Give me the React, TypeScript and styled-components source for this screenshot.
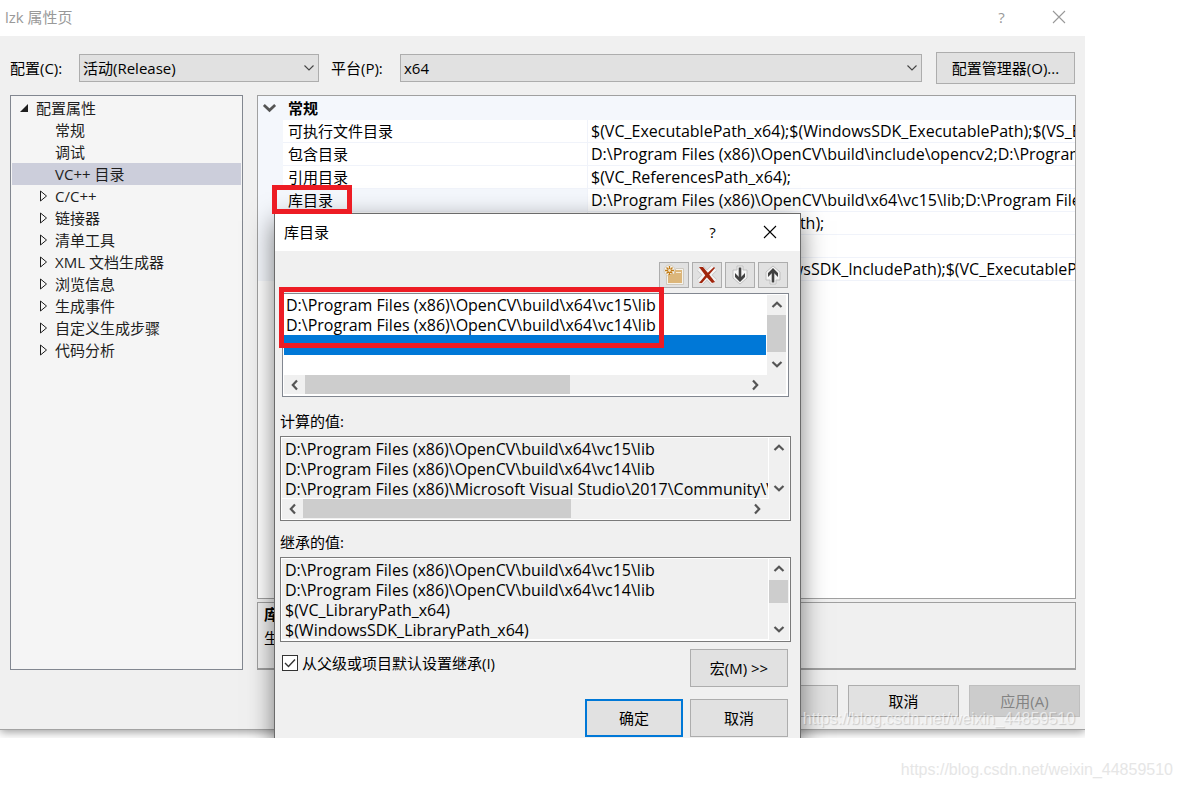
import React from 'react';
import styled, { createGlobalStyle, css } from 'styled-components';

const GlobalStyle = createGlobalStyle`
  *, *::before, *::after { box-sizing: border-box; }
  body {
    margin: 0;
    background: #fff;
    color: #000;
    font-family: "Open Sans", "Noto Sans CJK SC", sans-serif;
    font-size: 15px;
    line-height: 20px;
  }
  button, select, input, textarea { font: inherit; color: inherit; }
  ul { list-style: none; margin: 0; padding: 0; }
`;

const Page = styled.div`
  display: flex;
  flex-direction: column;
`;

const Desktop = styled.div`
  position: relative;
  overflow: hidden;
  margin-right: 97px;
  padding-bottom: 8px;
`;

const PropertyWindow = styled.main`
  border-bottom: 1px solid #a3a3a3;
  box-shadow: 0 2px 9px rgba(0, 0, 0, 0.4);
  background: #f0f0f0;
`;

const TitleBar = styled.header<{ $height: number; $inactive?: boolean }>`
  display: flex;
  align-items: center;
  justify-content: space-between;
  height: ${(p) => p.$height}px;
  padding-bottom: 2px;
  background: #fff;
  color: ${(p) => (p.$inactive ? '#999' : '#000')};
`;

const WindowTitle = styled.h1<{ $inset: number }>`
  margin: 0;
  padding-left: ${(p) => p.$inset}px;
  font-size: 15px;
  font-weight: 400;
`;

const TitleButtons = styled.div<{ $edge: number }>`
  display: flex;
  gap: 34px;
  padding-right: ${(p) => p.$edge}px;
`;

const TitleButton = styled.button`
  display: grid;
  place-items: center;
  width: 23px;
  height: 24px;
  padding: 0;
  border: 0;
  background: none;
`;

const Body = styled.div`
  padding: 16px 9px 12px 10px;
`;

const ConfigBar = styled.div`
  display: flex;
  align-items: center;
  height: 32px;
  padding-right: 1px;
`;

const ConfigLabel = styled.label`
  flex: none;
  width: 69px;
`;

const SelectWrap = styled.div<{ $width?: number }>`
  display: grid;
  align-items: center;
  height: 28px;
  ${(p) => (p.$width ? css`flex: none; width: ${p.$width}px; margin-right: 12px;` : css`flex: 1; margin-right: 14px;`)}

  > * { grid-area: 1 / 1; }
  > svg { justify-self: end; margin-right: 4px; pointer-events: none; }
`;

const Select = styled.select`
  appearance: none;
  width: 100%;
  height: 28px;
  padding: 0 24px 0 3px;
  border: 1px solid #adadad;
  border-radius: 0;
  background: #e1e1e1;
`;

const Button = styled.button<{ $width: number; $height: number; $primary?: boolean }>`
  flex: none;
  width: ${(p) => p.$width}px;
  height: ${(p) => p.$height}px;
  padding: 0;
  border: ${(p) => (p.$primary ? '2px solid #0078d7' : '1px solid #adadad')};
  background: #e1e1e1;

  &:disabled {
    border-color: #bfbfbf;
    background: #ccc;
    color: #838383;
  }
`;

const Panels = styled.div`
  display: flex;
  gap: 14px;
  height: 575px;
  margin-top: 11px;
`;

const Tree = styled.ul`
  flex: none;
  width: 233px;
  padding: 1px;
  border: 1px solid #828790;
  background: #f5f5f5;
  color: #1e1e1e;
`;

const TreeRow = styled.li<{ $root?: boolean; $selected?: boolean }>`
  display: flex;
  align-items: center;
  height: 22px;
  padding-left: ${(p) => (p.$root ? 7 : 26)}px;
  background: ${(p) => (p.$selected ? '#cccedb' : 'transparent')};
`;

const Twisty = styled.span`
  display: flex;
  align-items: center;
  width: 17px;
`;

const Right = styled.div`
  display: flex;
  flex: 1;
  flex-direction: column;
  gap: 3px;
  min-width: 0;
`;

const GridPanel = styled.section`
  flex: 1;
  overflow: hidden;
  border: 1px solid #a0a0a0;
  background: #fff;
`;

const CategoryRow = styled.div`
  display: flex;
  align-items: center;
  height: 24px;
  padding-bottom: 1px;
  background: #f4f7fc;
  font-weight: 700;
`;

const Gutter = styled.span`
  display: flex;
  width: 30px;
  padding-left: 4px;
`;

const PropertyTable = styled.table`
  width: 100%;
  border-left: 25px solid #f4f7fc;
  border-spacing: 0;
  table-layout: fixed;
`;

const NameCell = styled.th<{ $selected?: boolean }>`
  width: 305px;
  height: 23px;
  padding: 0 0 0 5px;
  border-right: 1px solid #f0f3fa;
  border-bottom: 1px solid #f0f3fa;
  background: ${(p) => (p.$selected ? '#f4f7fc' : '#fff')};
  font-weight: 400;
  text-align: left;
`;

const ValueCell = styled.td`
  height: 23px;
  padding: 0 0 0 3px;
  overflow: hidden;
  border-bottom: 1px solid #f0f3fa;
  font-size: 16px;
  white-space: nowrap;
`;

const Description = styled.section`
  display: flex;
  flex-direction: column;
  gap: 4px;
  height: 68px;
  padding: 1px 6px;
  overflow: hidden;
  border: 1px solid #a0a0a0;
  border-bottom-width: 2px;
  white-space: nowrap;

  p { margin: 0; }
`;

const WindowActions = styled.div`
  display: flex;
  justify-content: flex-end;
  gap: 10px;
  margin: 15px -4px 0 0;
`;

const Dialog = styled.section`
  position: absolute;
  top: 213px;
  left: 274px;
  width: 527px;
  border: 1px solid #6b6b6b;
  background: #f0f0f0;
  box-shadow: 0 8px 24px rgba(0, 0, 0, 0.5);
`;

const DialogBody = styled.div`
  display: flex;
  flex-direction: column;
  padding: 11px 9px 12px 5px;
`;

const Toolbar = styled.div`
  display: flex;
  justify-content: flex-end;
  gap: 3px;
  padding-right: 3px;
`;

const ToolButton = styled.button`
  display: grid;
  place-items: center;
  width: 30px;
  height: 26px;
  padding: 0;
  border: 1px solid #adadad;
  background: #e1e1e1;
`;

const ListFrame = styled.div`
  display: grid;
  grid-template-columns: 1fr 19px;
  grid-template-rows: 80px 19px;
  height: 104px;
  margin: 5px 2px 14px;
  padding: 1px 2px 1px 1px;
  border: 1px solid #828790;
  background: #fff;
`;

const ListItem = styled.li<{ $selected?: boolean }>`
  height: 20px;
  margin-right: 1px;
  padding-left: 2px;
  background: ${(p) => (p.$selected ? '#0078d7' : '#fff')};
  font-size: 16px;
`;

const FieldLabel = styled.label`
  height: 20px;
  margin-bottom: 5px;
`;

const TextFrame = styled.div<{ $horizontal?: boolean }>`
  display: grid;
  grid-template-columns: 1fr 19px;
  grid-template-rows: ${(p) => (p.$horizontal ? '61px 19px' : '81px')};
  width: 511px;
  height: 85px;
  margin-bottom: ${(p) => (p.$horizontal ? 11 : 7)}px;
  padding: 1px 2px 1px 1px;
  border: 1px solid #7a7a7a;
  background: #f0f0f0;
  box-shadow: inset 0 0 0 1px #fff;
`;

const ValueText = styled.textarea`
  display: block;
  width: 100%;
  height: 100%;
  padding: 1px 4px 0 3px;
  overflow: hidden;
  resize: none;
  border: 0;
  border-right: 1px solid #fff;
  border-bottom: 1px solid #fff;
  outline: 0;
  background: #f0f0f0;
  font-size: 16px;
  white-space: pre;
`;

const ScrollTrack = styled.div<{ $vertical?: boolean }>`
  display: flex;
  flex-direction: ${(p) => (p.$vertical ? 'column' : 'row')};
  align-items: center;
  justify-content: space-between;
  padding: ${(p) => (p.$vertical ? '0 0 2px' : '0 3px 0 0')};
  background: #f0f0f0;
`;

const ScrollArrow = styled.span<{ $long?: boolean }>`
  display: grid;
  flex: none;
  place-items: center;
  width: ${(p) => (p.$long ? 21 : 19)}px;
  height: 19px;
`;

const ScrollRun = styled.div`
  display: flex;
  flex: 1;
  flex-direction: inherit;
  align-self: stretch;
`;

const ScrollThumb = styled.div<{ $size: number }>`
  flex: 0 0 ${(p) => p.$size}px;
  background: #cdcdcd;
`;

const InheritRow = styled.div`
  display: flex;
  align-items: flex-start;
  justify-content: space-between;
  padding: 0 3px 0 2px;
`;

const CheckLabel = styled.label`
  display: flex;
  align-items: center;
  gap: 4px;
  padding-top: 4px;
`;

const CheckMark = styled.span`
  display: grid;
  width: 16px;
  height: 16px;

  > * { grid-area: 1 / 1; margin: 0; }
  > svg { pointer-events: none; }
`;

const CheckInput = styled.input`
  appearance: none;
  width: 16px;
  height: 16px;
  border: 1px solid #333;
  background: #fff;
`;

const DialogActions = styled.div`
  display: flex;
  justify-content: flex-end;
  gap: 7px;
  padding: 12px 3px 0 0;
`;

const Highlight = styled.div<{ $left: number; $top: number; $width: number; $height: number }>`
  position: absolute;
  top: ${(p) => p.$top}px;
  left: ${(p) => p.$left}px;
  width: ${(p) => p.$width}px;
  height: ${(p) => p.$height}px;
  border: 5px solid #ed1c24;
  pointer-events: none;
`;

const watermark = css`
  font-family: "Liberation Sans", sans-serif;
  font-size: 16px;
  line-height: 20px;
  white-space: nowrap;
`;

const WindowWatermark = styled.span`
  ${watermark}
  position: absolute;
  right: 10px;
  bottom: 9px;
  color: rgba(255, 255, 255, 0.6);
  text-shadow: 1px 1px 1px rgba(0, 0, 0, 0.16);
  pointer-events: none;
`;

const PageWatermark = styled.footer`
  ${watermark}
  align-self: flex-end;
  padding: 22px 9px 0 0;
  color: #e6e6e6;
`;

type Direction = 'up' | 'down' | 'left' | 'right';

const turns: Record<Direction, number> = { down: 0, left: 90, up: 180, right: 270 };

function Chevron({ to, bold, size = 12 }: { to: Direction; bold?: boolean; size?: number }) {
  return (
    <svg width={size} height={size} viewBox="0 0 12 12" fill="none" aria-hidden="true">
      <path
        d={bold ? 'M1.5 4 L6 8.2 L10.5 4' : 'M1.5 3.5 L6 8 L10.5 3.5'}
        stroke={bold ? '#555' : '#444'}
        strokeWidth={bold ? 2.2 : 1.1}
        transform={`rotate(${turns[to]} 6 6)`}
      />
    </svg>
  );
}

function CloseIcon() {
  return (
    <svg width="14" height="14" viewBox="0 0 14 14" fill="none" stroke="currentColor" strokeWidth="1.1" aria-hidden="true">
      <path d="M1 1 L13 13 M13 1 L1 13" />
    </svg>
  );
}

function NewFolderIcon() {
  return (
    <svg width="22" height="22" viewBox="0 0 22 22" aria-hidden="true">
      <path d="M3.5 9 H11 L13 4.500 H20.500 V20.500 H3.500z" fill="#f6f3ec" stroke="#cfcac0" />
      <circle cx="6.500" cy="6.500" r="5.500" fill="#f6f3ec" stroke="#cfcac0" />
      <path d="M5 10 H19 V19 H5z" fill="#dcb67a" />
      <path d="M12 6 H19 V10 H11z" fill="#dcb67a" />
      <path d="M13 8 H18 V9 H13z" fill="#f7ecd8" />
      <path d="M6.500 2 V11 M2 6.500 H11 M3.500 3.500 L9.500 9.500 M9.500 3.500 L3.500 9.500" stroke="#c27d1a" strokeWidth="1.300" />
      <circle cx="6.500" cy="6.500" r="1.400" fill="#f3e2c4" />
    </svg>
  );
}

function DeleteIcon() {
  return (
    <svg width="22" height="22" viewBox="0 0 22 22" fill="none" aria-hidden="true">
      <path d="M4 4 L18 18 M18 4 L4 18" stroke="#c6c6c6" strokeWidth="8" />
      <path d="M4 4 L18 18 M18 4 L4 18" stroke="#f5f5f5" strokeWidth="6.500" />
      <path d="M3 3 L7 3 L12 9 L19 18 L16 19 L10.500 13z" fill="#a1260d" />
      <path d="M3 19 L10 10.500 L18 3 L19 4 L12 12 L6 19z" fill="#a1260d" />
    </svg>
  );
}

function MoveIcon({ up }: { up?: boolean }) {
  return (
    <svg width="18" height="20" viewBox="0 0 18 20" fill="none" aria-hidden="true">
      <g transform={up ? 'rotate(180 9 10)' : undefined}>
        <path d="M6 1 H12 V5 H16 V13 L9 19 L2 13 V5 H6z" fill="#f6f6f6" stroke="#c0c0c0" />
        <path d="M9 2.500 V14" stroke="#424242" strokeWidth="2.600" />
        <path d="M4 8 L9 13 L14 8 V12 L9 17 L4 12z" fill="#424242" />
      </g>
    </svg>
  );
}

function Scrollbar({ vertical, arrow, thumb, offset = 0 }: {
  vertical?: boolean; arrow?: boolean; thumb?: number; offset?: number;
}) {
  return (
    <ScrollTrack $vertical={vertical} aria-hidden="true">
      <ScrollArrow $long={arrow}><Chevron bold to={vertical ? 'up' : 'left'} /></ScrollArrow>
      <ScrollRun style={offset ? { paddingTop: offset } : undefined}>{thumb ? <ScrollThumb $size={thumb} /> : null}</ScrollRun>
      <ScrollArrow><Chevron bold to={vertical ? 'down' : 'right'} /></ScrollArrow>
    </ScrollTrack>
  );
}

const treeItems = [
  { text: '常规' },
  { text: '调试' },
  { text: 'VC++ 目录', selected: true },
  { text: 'C/C++', branch: true },
  { text: '链接器', branch: true },
  { text: '清单工具', branch: true },
  { text: 'XML 文档生成器', branch: true },
  { text: '浏览信息', branch: true },
  { text: '生成事件', branch: true },
  { text: '自定义生成步骤', branch: true },
  { text: '代码分析', branch: true },
];

const properties = [
  ['可执行文件目录', '$(VC_ExecutablePath_x64);$(WindowsSDK_ExecutablePath);$(VS_ExecutablePath)'],
  ['包含目录', 'D:\\Program Files (x86)\\OpenCV\\build\\include\\opencv2;D:\\Program Files (x86)'],
  ['引用目录', '$(VC_ReferencesPath_x64);'],
  ['库目录', 'D:\\Program Files (x86)\\OpenCV\\build\\x64\\vc15\\lib;D:\\Program Files (x86)'],
  ['库 WinRT 目录', '$(WindowsSDK_MetadataPath);'],
  ['源目录', '$(VC_SourcePath);'],
  ['排除目录', '$(VC_IncludePath);$(WindowsSDK_IncludePath);$(VC_ExecutablePath_x64)'],
];

const paths = [
  'D:\\Program Files (x86)\\OpenCV\\build\\x64\\vc15\\lib',
  'D:\\Program Files (x86)\\OpenCV\\build\\x64\\vc14\\lib',
];
const computed = [...paths, 'D:\\Program Files (x86)\\Microsoft Visual Studio\\2017\\Community\\VC'].join('\n');
const inherited = [...paths, '$(VC_LibraryPath_x64)', '$(WindowsSDK_LibraryPath_x64)'].join('\n');
const blogUrl = 'https://blog.csdn.net/weixin_44859510';

function LibraryDialog() {
  return (
    <Dialog role="dialog" aria-label="库目录">
      <TitleBar $height={37}>
        <WindowTitle as="h2" $inset={9}>库目录</WindowTitle>
        <TitleButtons $edge={19}>
          <TitleButton>?</TitleButton>
          <TitleButton aria-label="关闭"><CloseIcon /></TitleButton>
        </TitleButtons>
      </TitleBar>
      <DialogBody>
        <Toolbar>
          <ToolButton aria-label="新行"><NewFolderIcon /></ToolButton>
          <ToolButton aria-label="删除"><DeleteIcon /></ToolButton>
          <ToolButton aria-label="下移"><MoveIcon /></ToolButton>
          <ToolButton aria-label="上移"><MoveIcon up /></ToolButton>
        </Toolbar>
        <ListFrame>
          <ul>
            {paths.map((p) => <ListItem key={p}>{p}</ListItem>)}
            <ListItem $selected />
          </ul>
          <Scrollbar vertical thumb={37} offset={1} />
          <Scrollbar arrow thumb={265} />
          <ScrollTrack />
        </ListFrame>
        <FieldLabel htmlFor="computed">计算的值:</FieldLabel>
        <TextFrame $horizontal>
          <ValueText id="computed" readOnly value={computed} />
          <Scrollbar vertical />
          <Scrollbar arrow thumb={268} />
          <ScrollTrack />
        </TextFrame>
        <FieldLabel htmlFor="inherited">继承的值:</FieldLabel>
        <TextFrame>
          <ValueText id="inherited" readOnly value={inherited} />
          <Scrollbar vertical thumb={23} offset={2} />
        </TextFrame>
        <InheritRow>
          <CheckLabel>
            <CheckMark>
              <CheckInput type="checkbox" defaultChecked />
              <svg width="16" height="16" viewBox="0 0 16 16" fill="none" aria-hidden="true">
                <path d="M3 8 L6.500 11.500 L13 4.500" stroke="#333" strokeWidth="1.400" />
              </svg>
            </CheckMark>
            从父级或项目默认设置继承(I)
          </CheckLabel>
          <Button $width={98} $height={38}>宏(M) &gt;&gt;</Button>
        </InheritRow>
        <DialogActions>
          <Button $width={98} $height={38} $primary>确定</Button>
          <Button $width={98} $height={38}>取消</Button>
        </DialogActions>
      </DialogBody>
    </Dialog>
  );
}

export default function App() {
  return (
    <Page>
      <GlobalStyle />
      <Desktop>
        <PropertyWindow>
          <TitleBar $height={36} $inactive>
            <WindowTitle $inset={5}>lzk 属性页</WindowTitle>
            <TitleButtons $edge={15}>
              <TitleButton>?</TitleButton>
              <TitleButton aria-label="关闭"><CloseIcon /></TitleButton>
            </TitleButtons>
          </TitleBar>
          <Body>
            <ConfigBar>
              <ConfigLabel htmlFor="configuration">配置(C):</ConfigLabel>
              <SelectWrap $width={240}>
                <Select id="configuration" defaultValue="release">
                  <option value="release">活动(Release)</option>
                </Select>
                <Chevron to="down" />
              </SelectWrap>
              <ConfigLabel htmlFor="platform">平台(P):</ConfigLabel>
              <SelectWrap>
                <Select id="platform" defaultValue="x64">
                  <option value="x64">x64</option>
                </Select>
                <Chevron to="down" />
              </SelectWrap>
              <Button $width={139} $height={32}>配置管理器(O)...</Button>
            </ConfigBar>
            <Panels>
              <Tree>
                <TreeRow $root>
                  <Twisty>
                    <svg width="10" height="10" viewBox="0 0 10 10" aria-hidden="true"><path d="M9 1 V9 H1z" fill="#1e1e1e" /></svg>
                  </Twisty>
                  配置属性
                </TreeRow>
                {treeItems.map((item) => (
                  <TreeRow key={item.text} $selected={item.selected}>
                    <Twisty>
                      {item.branch && (
                        <svg width="10" height="12" viewBox="0 0 10 12" fill="none" aria-hidden="true">
                          <path d="M2.500 1 V11 L8.500 6z" stroke="#1e1e1e" />
                        </svg>
                      )}
                    </Twisty>
                    {item.text}
                  </TreeRow>
                ))}
              </Tree>
              <Right>
                <GridPanel>
                  <CategoryRow>
                    <Gutter><Chevron bold to="down" size={15} /></Gutter>
                    常规
                  </CategoryRow>
                  <PropertyTable>
                    <tbody>
                      {properties.map(([name, value]) => (
                        <tr key={name}>
                          <NameCell scope="row" $selected={name === '库目录'}>{name}</NameCell>
                          <ValueCell>{value}</ValueCell>
                        </tr>
                      ))}
                    </tbody>
                  </PropertyTable>
                </GridPanel>
                <Description>
                  <strong>库目录</strong>
                  <p>生成 VC++ 项目期间，搜索库文件时使用的路径。</p>
                </Description>
              </Right>
            </Panels>
            <WindowActions>
              <Button $width={111} $height={32}>确定</Button>
              <Button $width={111} $height={32}>取消</Button>
              <Button $width={111} $height={32} disabled>应用(A)</Button>
            </WindowActions>
          </Body>
        </PropertyWindow>
        <LibraryDialog />
        <Highlight $left={272} $top={185} $width={80} $height={29} />
        <Highlight $left={279} $top={287} $width={385} $height={61} />
        <WindowWatermark>{blogUrl}</WindowWatermark>
      </Desktop>
      <PageWatermark>{blogUrl}</PageWatermark>
    </Page>
  );
}
